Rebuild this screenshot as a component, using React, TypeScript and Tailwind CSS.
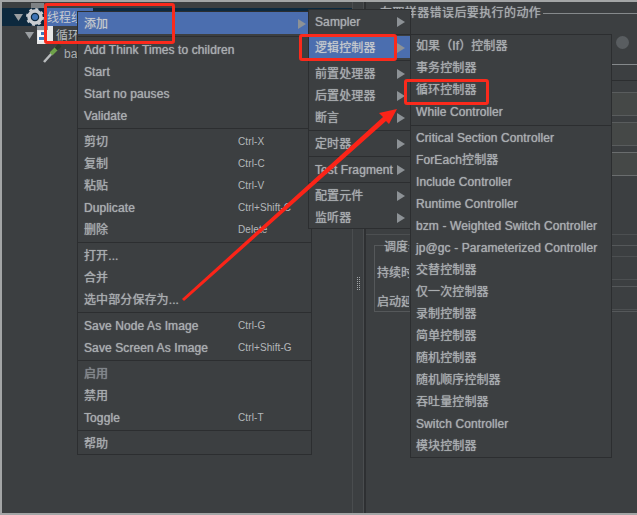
const font = "font-['Liberation_Sans','Noto_Sans_CJK_SC',sans-serif]";

type Row = { label?: string; shortcut?: string; sub?: boolean; active?: boolean; dim?: boolean; sep?: boolean };

const mainMenu: Row[] = [
  { label: '添加', sub: true, active: true },
  { sep: true },
  { label: 'Add Think Times to children' },
  { label: 'Start' },
  { label: 'Start no pauses' },
  { label: 'Validate' },
  { sep: true },
  { label: '剪切', shortcut: 'Ctrl-X' },
  { label: '复制', shortcut: 'Ctrl-C' },
  { label: '粘贴', shortcut: 'Ctrl-V' },
  { label: 'Duplicate', shortcut: 'Ctrl+Shift-C' },
  { label: '删除', shortcut: 'Delete' },
  { sep: true },
  { label: '打开...' },
  { label: '合并' },
  { label: '选中部分保存为...' },
  { sep: true },
  { label: 'Save Node As Image', shortcut: 'Ctrl-G' },
  { label: 'Save Screen As Image', shortcut: 'Ctrl+Shift-G' },
  { sep: true },
  { label: '启用', dim: true },
  { label: '禁用' },
  { label: 'Toggle', shortcut: 'Ctrl-T' },
  { sep: true },
  { label: '帮助' },
];

const addMenu: Row[] = [
  { label: 'Sampler', sub: true },
  { sep: true },
  { label: '逻辑控制器', sub: true, active: true },
  { sep: true },
  { label: '前置处理器', sub: true },
  { label: '后置处理器', sub: true },
  { label: '断言', sub: true },
  { sep: true },
  { label: '定时器', sub: true },
  { sep: true },
  { label: 'Test Fragment', sub: true },
  { sep: true },
  { label: '配置元件', sub: true },
  { label: '监听器', sub: true },
];

const logicMenu: Row[] = [
  { label: '如果（If）控制器' },
  { label: '事务控制器' },
  { label: '循环控制器' },
  { label: 'While Controller' },
  { sep: true },
  { label: 'Critical Section Controller' },
  { label: 'ForEach控制器' },
  { label: 'Include Controller' },
  { label: 'Runtime Controller' },
  { label: 'bzm - Weighted Switch Controller' },
  { label: 'jp@gc - Parameterized Controller' },
  { label: '交替控制器' },
  { label: '仅一次控制器' },
  { label: '录制控制器' },
  { label: '简单控制器' },
  { label: '随机控制器' },
  { label: '随机顺序控制器' },
  { label: '吞吐量控制器' },
  { label: 'Switch Controller' },
  { label: '模块控制器' },
];

function Menu({ rows, className, rowClass, shortcutClass }: { rows: Row[]; className: string; rowClass: string; shortcutClass?: string }) {
  return (
    <div className={`absolute border border-[#2c2e30] bg-[#3c3f41] ${className}`}>
      {rows.map((row, i) =>
        row.sep ? (
          <div key={i} className="flex h-1 items-center">
            <div className="h-px w-full bg-[#2c2e30]" />
          </div>
        ) : (
          <div
            key={i}
            className={`flex h-[22px] items-center whitespace-nowrap pr-[5px] text-[12px] tracking-[0.1px] [text-shadow:0_0_1px_#a9adb0] ${rowClass} ${
              row.active ? 'bg-[#4b6eaf] text-[#c6cbd2]' : row.dim ? 'text-[#80858a] [text-shadow:0_0_1px_#80858a]' : 'text-[#a9adb0]'
            }`}
          >
            <span className="flex-1">{row.label}</span>
            {row.shortcut && (
              <span className={`text-[10px] text-[#b4b8bb] [text-shadow:none] ${shortcutClass}`}>{row.shortcut}</span>
            )}
            {row.sub && (
              <svg width="8" height="10" viewBox="0 0 8 10" className="shrink-0">
                <polygon points="0,0 8,5 0,10" fill="#8d9296" />
              </svg>
            )}
          </div>
        ),
      )}
    </div>
  );
}

function TreeArrow() {
  return (
    <svg width="9" height="7" viewBox="0 0 9 7" className="shrink-0">
      <polygon points="0,0 9,0 4.5,7" fill="#9a9ea1" />
    </svg>
  );
}

function Gear() {
  return (
    <svg width="18" height="18" viewBox="0 0 18 18" className="shrink-0">
      <circle cx="9" cy="9" r="6" fill="none" stroke="#c9ccd0" strokeWidth="3.5" />
      <circle cx="9" cy="9" r="8" fill="none" stroke="#c9ccd0" strokeWidth="2" strokeDasharray="3 3.3" />
      <circle cx="9" cy="9" r="3" fill="#3f74b5" />
    </svg>
  );
}

function LoopIcon() {
  return (
    <svg width="18" height="18" viewBox="0 0 18 18" className="shrink-0">
      <rect x="1" y="0" width="16" height="18" fill="#e8e8e8" />
      <rect x="1" y="0" width="11" height="4" fill="#8f9498" />
      <rect x="2" y="5" width="9" height="10" fill="#f4f6f8" />
      <rect x="5" y="6" width="5" height="3" fill="#3f78b8" />
      <rect x="3" y="11" width="5" height="3" fill="#3f78b8" />
    </svg>
  );
}

function Pipette() {
  return (
    <svg width="20" height="20" viewBox="0 0 20 20" className="shrink-0">
      <path d="M1 19 L10 9" stroke="#b9bcbe" strokeWidth="2.5" />
      <path d="M8 11 L14 5" stroke="#6fa24a" strokeWidth="4" />
      <path d="M13 6 L17 2" stroke="#2d3a2c" strokeWidth="4" />
    </svg>
  );
}

function Tree() {
  return (
    <div className="w-[350px] shrink-0 overflow-hidden">
      <div className="flex h-[6px] items-end pl-[29px]">
        <div className="h-[5px] w-[13px] bg-[#7d8184]" />
      </div>
      <div className="flex h-[18px] items-center gap-[3px] bg-[#0d293e] pl-[12px]">
        <TreeArrow />
        <div className="-my-2">
          <Gear />
        </div>
        <div className="flex h-[18px] w-[46px] items-center overflow-hidden bg-[#4b6eaf] pt-px text-[12px] whitespace-nowrap text-[#c6cbd2]">
          线程组
        </div>
      </div>
      <div className="flex h-[18px] items-center gap-[2px] pl-[23px]">
        <TreeArrow />
        <LoopIcon />
        <span className="pt-[2px] text-[12px] text-[#b4b8bb]">循环控制器</span>
      </div>
      <div className="flex h-[18px] items-center gap-[1px] pl-[41px]">
        <Pipette />
        <span className="pt-[2px] text-[12px] text-[#a9adb0]">baidu</span>
      </div>
    </div>
  );
}

function Splitter() {
  return (
    <div className="flex w-[12px] shrink-0 justify-center border-x border-[#4a4d4f] pt-[275px]">
      <div className="h-[13px] w-[3px] border-x border-dotted border-[#a0a4a6]" />
    </div>
  );
}

function RightPanel() {
  return (
    <div className="min-w-0 flex-1 border-l-2 border-[#2e3032] pt-[2px]">
      <div className="ml-[14px] flex items-center gap-[2px] whitespace-nowrap text-[12px] tracking-[0.4px] text-[#a9adb0] [text-shadow:0_0_1px_#a9adb0]">
        <span>在取样器错误后要执行的动作</span>
        <div className="h-px flex-1 bg-[#85898b]" />
      </div>
      <div className="flex h-[42px] items-center justify-end pb-[2px] pr-[8px]">
        <div className="h-[13px] w-[13px] rounded-full bg-[#595d60]" />
      </div>
      <div className="h-px bg-[#85898b]" />
      <div className="mt-[15px] h-px bg-[#2c2e30]" />
      <div className="mt-[11px] flex flex-col gap-[6px]">
        <div className="h-[24px] border-y border-[#595c5d] bg-[#454847]" />
        <div className="h-[24px] border-y border-[#595c5d] bg-[#454847]" />
        <div className="h-[24px] border-y border-[#6a6d6e] bg-[#454847]" />
      </div>
      <div className="mt-[58px] h-px bg-[#4c4f51]" />
      <div className="ml-[8px] mt-[10px] flex h-[67px] border-y border-l border-[#55585a]">
        <div className="flex w-[36px] shrink-0 flex-col text-[12px] whitespace-nowrap text-[#a9adb0] [text-shadow:0_0_1px_#a9adb0]">
          <span className="-mt-[8px] ml-[9px] w-[25px] overflow-hidden bg-[#3c3f41]">调度器</span>
          <span className="mt-[8px] ml-[2px] w-[32px] overflow-hidden">持续时间</span>
          <span className="mt-[12px] ml-[2px] w-[32px] overflow-hidden">启动延迟</span>
        </div>
        <div className="flex-1 pt-[10px]">
          <div className="h-px bg-[#4c4f51]" />
          <div className="mt-[22px] h-px bg-[#4c4f51]" />
          <div className="mt-[6px] h-px bg-[#55585a]" />
          <div className="mt-[22px] h-px bg-[#4c4f51]" />
        </div>
      </div>
    </div>
  );
}

function Annotations() {
  return (
    <>
      <div className="absolute left-[44px] top-[3px] h-[41px] w-[131px] rounded-[3px] border-[3px] border-[#fa2a1c]" />
      <div className="absolute left-[299px] top-[34px] h-[27px] w-[98px] rounded-[3px] border-[3px] border-[#fa2a1c]" />
      <div className="absolute left-[404px] top-[79px] h-[26px] w-[85px] rounded-[3px] border-[3px] border-[#fa2a1c]" />
      <svg className="absolute left-0 top-0" width="637" height="515" viewBox="0 0 637 515">
        <polygon points="182,299 383,117 379,113 397,109 389,124 386,121 184,301" fill="#fb2418" />
      </svg>
    </>
  );
}

export default function App() {
  return (
    <div className={`relative h-[515px] w-[637px] overflow-hidden bg-[#3c3f41] ${font}`}>
      <div className="flex h-full flex-col border-b-2 border-l-2 border-t-2 border-[#a3a5a6]">
        <div className="flex min-h-0 flex-1">
          <Tree />
          <Splitter />
          <RightPanel />
        </div>
      </div>
      <Menu rows={mainMenu} className="left-[77px] top-[11px] w-[235px]" rowClass="pl-[6px] pt-px" shortcutClass="w-[68px]" />
      <Menu rows={addMenu} className="left-[308px] top-[9px] w-[103px]" rowClass="pl-[6px] pt-px" />
      <Menu rows={logicMenu} className="left-[410px] top-[34px] w-[202px]" rowClass="pl-[5px]" />
      <Annotations />
    </div>
  );
}
